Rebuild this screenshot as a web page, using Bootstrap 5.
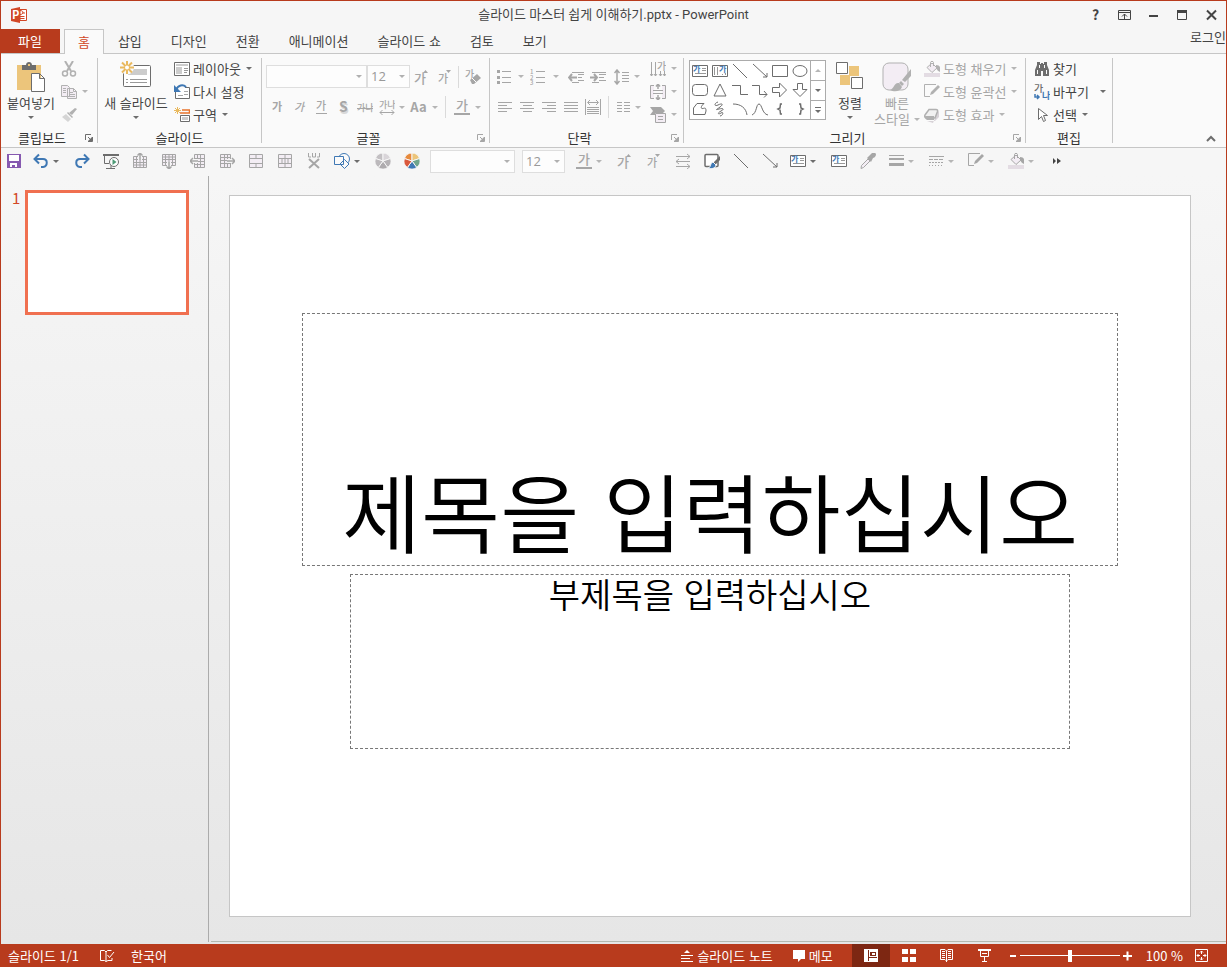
<!DOCTYPE html>
<html lang="ko">
<head>
<meta charset="utf-8">
<meta name="viewport" content="width=device-width, initial-scale=1">
<title>슬라이드 마스터 쉽게 이해하기.pptx - PowerPoint</title>
<link href="https://cdn.jsdelivr.net/npm/bootstrap@5.3.0/dist/css/bootstrap.min.css" rel="stylesheet">
<style>
:root{--brand:#b83b1d;--line:#c6c6c6;--ink:#444;--dim:#a6a6a6}
body{font-family:"Open Sans","Noto Sans CJK KR",sans-serif;font-size:12px;line-height:16px;color:var(--ink);background:#f6f6f6}
.ko{font-family:"Noto Sans CJK KR",sans-serif;font-size:13px}
.app-window{border:1px solid var(--brand);border-bottom:0}
.tb{--bs-btn-color:var(--ink);--bs-btn-disabled-color:var(--dim);--bs-btn-disabled-opacity:1;--bs-btn-hover-color:var(--ink);font:inherit;line-height:16px;padding:0;border:0;border-radius:0;white-space:nowrap;display:flex;align-items:center;justify-content:center}
svg{fill:none;stroke:currentColor;flex:none;display:block;overflow:visible}
svg text{fill:currentColor;stroke:none;font-family:"Noto Sans CJK KR",sans-serif;font-weight:500}
.ic{width:16px;height:16px}
.solid{fill:currentColor;stroke:none}
.caret{width:0;height:0;border:3px solid transparent;border-top-color:#6d6d6d;border-bottom:0;flex:none}
:disabled .caret{border-top-color:#b5b5b5}
.icon-ink{color:#6d6d6d}
:disabled .icon-ink{color:#b1b1b1}
/* title bar */
.titlebar{height:28px;display:grid;grid-template-columns:1fr auto 1fr}
.title-text{font:13px/18px Roboto,"Noto Sans CJK KR",sans-serif}
.win-btn{width:29px;height:28px}
/* tabs */
.tabs-row{height:25px;border-bottom:1px solid var(--line)}
.tabs-row a{color:var(--ink);text-decoration:none;line-height:24px;padding:0 15px 0 14px;white-space:nowrap}
.tabs-row a.file-tab{background:var(--brand);color:#fff;padding:0 18px 0 17px;margin-right:4px}
.tabs-row a.home-tab{background:#fafafa;color:#d24726;border:1px solid var(--line);border-bottom:0;padding:0 13px;height:25px}
/* ribbon */
.ribbon{height:94px;background:#fafafa;border-bottom:1px solid var(--line)}
.grp{display:flex;flex-direction:column}
.grp-body{flex:1;display:flex;padding-top:3px}
.grp-name{height:16px;line-height:14px;display:flex;color:#333}
.grp-name span{flex:1;text-align:center}
.launch{width:12px;height:14px;margin-right:2px}
.divide{width:1px;background:var(--line);margin:4px 0;flex:none}
.g-clip{width:96px}.g-slide{width:163px}.g-font{width:227px}.g-para{width:193px}.g-draw{width:341px}.g-edit{width:86px}
.big{flex-direction:column;justify-content:flex-start;padding-top:4px;align-self:flex-start}
.big .art{height:31px;margin-bottom:3px}
.big .caret{margin-top:5px}
.w-paste{width:60px}.w-new{width:76px}.w-arr{width:48px}.w-quick{width:46px}
.rows{display:flex;flex-direction:column;align-items:flex-start}
.rows .tb{height:23px;gap:3px}
.rows .ic+.caret{margin-left:2px}
.tool-grid{display:grid;align-items:center}
.tool-grid .tb{height:22px}
.sep{justify-self:center;width:1px;height:22px;background:#dadada}
.font-1{grid-template-columns:101px 43px 24px 22px 5px 24px;margin-top:8px;height:23px}
.font-2{grid-template-columns:22px 22px 22px 22px 22px 22px 8px 25px 8px 12px 22px 10px;margin-top:8px}
.para-1{grid-template-columns:28px 6px 28px 7px 6px 22px 22px 25px 6px;margin-top:8px;height:23px}
.para-2{grid-template-columns:22px 22px 22px 22px 22px 8px 22px 8px;margin:8px 0 0 4px}
.combo{appearance:none;height:23px;border:1px solid #dedede;border-radius:0;background:#fdfdfd;color:#999;padding:0 3px;font:13px/21px "Open Sans",sans-serif;opacity:1;background-image:url("data:image/svg+xml,%3Csvg xmlns='http://www.w3.org/2000/svg' width='6' height='3'%3E%3Cpath d='M0 0h6L3 3z' fill='%23b0b0b0'/%3E%3C/svg%3E");background-repeat:no-repeat;background-position:right 4px center}
.gallery{width:137px;height:60px;margin:3px 0 0 5px;border:1px solid #ababab;display:grid;grid-template-columns:repeat(6,20px) 1fr;grid-template-rows:repeat(3,1fr);background:#fff}
.gallery .tb{color:#6d6d6d}
.gallery .scr{border-left:1px solid #ababab}
.gallery .scr+.tb~.scr{border-top:1px solid #ababab}
/* quick access bar */
.qat{height:28px;padding-bottom:2px;display:flex;align-items:center}
.qat .tb{width:29px;height:24px}
.qat .tb.save{width:26px}
.qat .tb.split{width:40px;justify-content:flex-start;padding-left:6px;gap:4px}
.qat .wide{width:85px;margin:0 7px 0 4px}
.qat .slim{width:43px;margin-right:5px}
/* workspace */
.workspace{flex:1;min-height:0;background:linear-gradient(#f6f6f6,#e6e6e6)}
.thumbs{width:208px;border-right:1px solid #ababab;padding:14px 0 0 11px;margin-bottom:2px}
.thumbs .num{width:13px;color:#d24726;font:15px/15px "Noto Sans CJK KR",sans-serif}
.thumb{width:164px;height:125px;border:3px solid #f07050;background:#fff;padding:0}
.stage{border-bottom:1px solid #b3b9b0;margin:0 0 2px 2px;padding:19px 35px 24px 18px;min-width:0}
.slide{width:100%;height:100%;background:#fff;border:1px solid var(--line);display:grid;justify-items:center;grid-template-rows:117fr 253fr 8fr 175fr 167fr;color:#000}
.ph{border:1px dashed #777;display:flex;justify-content:center;margin:0;white-space:nowrap;font-family:"Noto Sans CJK KR",sans-serif;font-weight:350;min-width:0}
.ph-title{grid-row:2;width:85%;align-items:flex-end;font-size:86px;line-height:98px;padding-bottom:6px}
.ph-sub{grid-row:4;width:75%;font-size:34px;line-height:38px}
/* status bar */
.status{height:23px;background:var(--brand);color:#fff;padding-left:7px}
.status .tb{--bs-btn-color:#fff;--bs-btn-hover-color:#fff;height:23px}
.status .view{width:38px}
.status .view.on{background:#7d2712}
.notes-btn{margin-right:20px}
.memo-btn{margin-right:19px}
.zoom-out{margin-left:6px}
.zoom{appearance:none;width:100px;height:13px;background:linear-gradient(#fff,#fff) center/100% 1px no-repeat;margin:0 3px}
.zoom::-webkit-slider-thumb{appearance:none;width:4px;height:12px;background:#fff}
.zoom-num{margin:0 12px 0 14px}
.fit{margin-right:18px}
</style>
</head>
<body>
<svg class="d-none" aria-hidden="true">
  <symbol id="i-find" viewBox="0 0 16 16"><path class="solid" d="M3 1h3v2h1V2h2v1h1V1h3v3l2 5v6H9v-5H7v5H1V9l2-5z"/><path stroke="#fafafa" d="M3.5 9v4M12.5 9v4M5.500 4v3M10.500 4v3"/></symbol>
  <symbol id="i-cut" viewBox="0 0 16 16"><path stroke-width="2" d="M4 0l6 10M12 0L6 10"/><circle cx="4" cy="12.500" r="2.500" stroke-width="1.500"/><circle cx="12" cy="12.500" r="2.500" stroke-width="1.500"/></symbol>
  <symbol id="i-copy" viewBox="0 0 16 16"><path fill="#f3edf4" d="M.5 1.500h6l2 2v9h-8zM6.500 4.500h6l3 3v7h-9zM12.500 4.500v3h3"/><path d="M2 4.500h3M2 6.500h3M2 8.500h3M8 8.500h4M8 10.500h6M8 12.500h6"/></symbol>
  <symbol id="i-brush" viewBox="0 0 16 16"><path class="solid" d="M16 2l-5 6-3-2 6-5z"/><path class="solid" d="M7 5l5 5-1 1-5-5z"/><path fill="#d5d5d5" stroke="none" d="M5 7l5 5-3 3-6-5z"/></symbol>
  <symbol id="i-layout" viewBox="0 0 16 16"><path fill="#fff" d="M.5 1.500h15v13H.5z"/><path class="solid" opacity=".35" d="M2 3h12v2H2zM2 6h6v7H2z"/><path opacity=".7" d="M10 7.500h4M10 9.500h4M10 11.500h3"/></symbol>
  <symbol id="i-reset" viewBox="0 0 16 16"><path fill="#fff" d="M1.500 8v6.500h14v-11H11"/><path opacity=".6" d="M10 7.500h4M4 11.500h5M10 10.500h4"/><path stroke="#3f78b4" stroke-width="2" d="M2 6c2-5 7-6 10-3"/><path fill="#3f78b4" stroke="none" d="M0 1v7h7z"/></symbol>
  <symbol id="i-section" viewBox="0 0 16 16"><path stroke="#e9b95e" d="M3.500 0v7M0 3.500h7M1 1l5 5M6 1L1 6"/><path stroke="#e8742d" stroke-width="1.500" d="M8 3h7.500v3H6"/><path fill="#fff" d="M6.500 8.500h9v6h-9z"/><path class="solid" opacity=".35" d="M8 10h6v3H8z"/></symbol>
  <symbol id="i-up" viewBox="0 0 16 16"><text x="0" y="14" font-size="13">가</text><path class="solid" d="M9 4l2.500-3L14 4z"/></symbol>
  <symbol id="i-down" viewBox="0 0 16 16"><text x="1" y="14" font-size="11">가</text><path class="solid" d="M9 1h5l-2.500 3z"/></symbol>
  <symbol id="i-clear" viewBox="0 0 16 16"><text x="0" y="9" font-size="10">가</text><path class="solid" d="M5 11l7-6 4 4-7 6H7z"/><path stroke="#fff" d="M7 9l4 4"/></symbol>
  <symbol id="i-bold" viewBox="0 0 16 16"><text x="3" y="12" font-size="11" style="font-weight:700">가</text></symbol>
  <symbol id="i-ital" viewBox="0 0 16 16"><text x="3" y="12" font-size="11" font-style="italic">가</text></symbol>
  <symbol id="i-under" viewBox="0 0 16 16"><text x="3" y="11" font-size="11">가</text><path d="M3 14.500h11"/></symbol>
  <symbol id="i-shadow" viewBox="0 0 16 16"><text x="5" y="15" font-size="14" style="font-weight:700" opacity=".4">S</text><text x="4" y="13" font-size="14" style="font-weight:700">S</text></symbol>
  <symbol id="i-strike" viewBox="0 0 16 16"><text x="0" y="12" font-size="9">가나</text><path d="M0 9.500h16"/></symbol>
  <symbol id="i-kern" viewBox="0 0 16 16"><text x="0" y="9" font-size="9">가나</text><path d="M1 13.500h14M3.500 11L1 13.500 3.500 16M12.500 11l2.500 2.500-2.500 2.500"/></symbol>
  <symbol id="i-color" viewBox="0 0 16 16"><text x="2" y="11" font-size="13">가</text><path class="solid" d="M0 14h16v2H0z"/></symbol>
  <symbol id="i-bullet" viewBox="0 0 16 16"><path class="solid" d="M1 1h3v3H1zM1 7h3v3H1zM1 12h3v3H1z"/><path d="M6 2.500h9M6 8.500h9M6 13.500h9"/></symbol>
  <symbol id="i-number" viewBox="0 0 16 16"><text x="0" y="5" font-size="6">1</text><text x="0" y="11" font-size="6">2</text><text x="0" y="16" font-size="6">3</text><path d="M6 2.500h9M6 8.500h9M6 13.500h9"/></symbol>
  <symbol id="i-outdent" viewBox="0 0 16 16"><path d="M4 3.500h12M10 5.500h6M10 8.500h4M10 11.500h6M4 13.500h7"/><path stroke-width="2" d="M9 8.500H1M4 5L1 8.500 4 12"/></symbol>
  <symbol id="i-indent" viewBox="0 0 16 16"><path d="M2 3.500h14M9 5.500h7M9 8.500h5M9 11.500h7M2 13.500h7"/><path stroke-width="2" d="M0 8.500h7M4 5l3 3.500L4 12"/></symbol>
  <symbol id="i-spacing" viewBox="0 0 16 16"><path stroke-width="1.500" d="M3 1v14M.5 4L3 1l2.500 3M.5 12L3 15l2.500-3"/><path d="M8 3.500h7M8 6.500h7M8 9.500h7M8 12.500h7"/></symbol>
  <symbol id="i-left" viewBox="0 0 16 16"><path d="M1 3.500h14M1 6.500h9M1 9.500h14M1 12.500h9"/></symbol>
  <symbol id="i-center" viewBox="0 0 16 16"><path d="M1 3.500h14M4 6.500h9M1 9.500h14M4 12.500h9"/></symbol>
  <symbol id="i-right" viewBox="0 0 16 16"><path d="M1 3.500h14M6 6.500h9M1 9.500h14M6 12.500h9"/></symbol>
  <symbol id="i-just" viewBox="0 0 16 16"><path d="M1 3.500h14M1 6.500h14M1 9.500h14M1 12.500h14"/></symbol>
  <symbol id="i-dist" viewBox="0 0 16 16"><path d="M.5 0v16M15.500 0v16M3 3.500h10M5 1L2.500 3.500 5 6M11 1l2.500 2.500L11 6M2 8.500h12M2 10.500h12M2 12.500h12M2 14.500h12"/></symbol>
  <symbol id="i-cols" viewBox="0 0 16 16"><path d="M2 3.500h5M2 6.500h5M2 9.500h5M2 12.500h5M9 3.500h6M9 6.500h6M9 9.500h6M9 12.500h6"/></symbol>
  <symbol id="i-tdir" viewBox="0 0 16 16"><path d="M1.500 1v14M5.500 1v14M10.500 10v5M14.500 10v5M0 13l1.500 2L3 13M4 13l1.500 2L7 13M9 13l1.500 2 1.500-2M13 13l1.500 2 1.500-2"/><text x="7" y="9" font-size="10">가</text></symbol>
  <symbol id="i-valign" viewBox="0 0 16 16"><path fill="#f3edf4" d="M4 1.500H.5v13H4M12 1.500h3.500v13H12"/><path d="M3 6.500h10M3 9.500h10"/><path stroke-width="1.500" d="M8 0v5M6 2.500L8 0l2 2.500M8 16v-5M6 13.500L8 16l2-2.500"/></symbol>
  <symbol id="i-smart" viewBox="0 0 16 16"><path class="solid" d="M0 0h11l4 4-2 2H5v2H0l3-4z"/><path fill="#f3edf4" d="M5.500 6.500h10v9h-10z"/><path d="M8 9.500h5M8 12.500h5"/></symbol>
  <symbol id="i-tbox" viewBox="0 0 16 16"><path fill="#fff" d="M.5 2.500h15v11H.5z"/><path opacity=".7" d="M10 5.500h4M10 7.500h4M3 10.500h11"/><text x="1" y="9" font-size="8" style="fill:#3f78b4;font-weight:700">가</text></symbol>
  <symbol id="i-vtbox" viewBox="0 0 16 16"><path fill="#fff" d="M.5 2.500h15v11H.5z"/><path opacity=".7" d="M2.500 4v8M5.500 4v8M10.500 11v1M13.500 10v2"/><text x="7" y="9" font-size="8" style="fill:#3f78b4;font-weight:700">가</text></symbol>
  <symbol id="i-line" viewBox="0 0 16 16"><path d="M1 1l14 14"/></symbol>
  <symbol id="i-arrow" viewBox="0 0 16 16"><path d="M1 1l14 13M15 10v4h-4"/></symbol>
  <symbol id="i-rect" viewBox="0 0 16 16"><path d="M.5 2.500h15v11H.5z"/></symbol>
  <symbol id="i-oval" viewBox="0 0 16 16"><ellipse cx="8" cy="8" rx="7" ry="5.500"/></symbol>
  <symbol id="i-rrect" viewBox="0 0 16 16"><rect x=".5" y="2.500" width="15" height="11" rx="3"/></symbol>
  <symbol id="i-tri" viewBox="0 0 16 16"><path d="M8 2l6 12H2z"/></symbol>
  <symbol id="i-elbow" viewBox="0 0 16 16"><path d="M0 3.500h8.500v9H16"/></symbol>
  <symbol id="i-elbowa" viewBox="0 0 16 16"><path d="M0 3.500h7.500v9H15M12 9l3 3.500-3 3"/></symbol>
  <symbol id="i-ra" viewBox="0 0 16 16"><path d="M.5 5.500h7V1l7 7-7 7v-4.500h-7z"/></symbol>
  <symbol id="i-da" viewBox="0 0 16 16"><path d="M5.500 1.500h5v6H15l-7 7-7-7h4.500z"/></symbol>
  <symbol id="i-free" viewBox="0 0 16 16"><path d="M5 2.500h7C8 6 9 8 11 7.500s3-1 3 2.500l-1 3.500H1.500V7z"/></symbol>
  <symbol id="i-scrib" viewBox="0 0 16 16"><path d="M6 1C2 2 2 6 6 4s6-1 2 2-5 3-1 2 6 0 2 2-3 4 0 2 2 3-1 3"/></symbol>
  <symbol id="i-arc" viewBox="0 0 16 16"><path d="M1 3c8 0 13 4 14 11"/></symbol>
  <symbol id="i-curve" viewBox="0 0 16 16"><path d="M0 14C5 12 4 3 7 3s3 10 9 11"/></symbol>
  <symbol id="i-lb" viewBox="0 0 16 16"><path stroke-width="1.500" d="M10 3H8.500L8 7 6 8l2 1 .5 4H10"/></symbol>
  <symbol id="i-rb" viewBox="0 0 16 16"><path stroke-width="1.500" d="M7 3h1.500L9 7l2 1-2 1-.5 4H7"/></symbol>
  <symbol id="i-bucket" viewBox="0 0 16 16"><path fill="#f3edf4" d="M3 6.500L8 2l5 5-5 4.500z"/><path d="M6.500 6V1.500C6.500 0 9.500 0 9.500 1.500V5"/><path class="solid" d="M12 4c4 0 5 3 4 7-2-1-3-2-4-4z"/><path fill="#e3dce3" stroke="none" d="M0 12h16v4H0z"/></symbol>
  <symbol id="i-pen" viewBox="0 0 16 16"><path d="M12 .5H.5v12H6"/><path class="solid" d="M14 1l2 2-7 7-3 1 1-3z"/></symbol>
  <symbol id="i-effect" viewBox="0 0 16 16"><path fill="#d7d2d7" stroke="none" d="M3 14h8l4-4V5l-1-1-5 12z"/><path stroke-width="1.500" fill="#f1f1f1" d="M5 2.500h7q2 0 1.500 2L11 11H2q-2-1-1-3z"/><path class="solid" d="M1 9h9v4H3q-2-1-2-4z"/></symbol>
  <symbol id="i-replace" viewBox="0 0 16 16"><text x="0" y="8" font-size="10">가</text><text x="8" y="15" font-size="9" style="fill:#3f78b4;font-weight:700">나</text><path stroke="#3f78b4" stroke-width="1.500" d="M1 10v3h4M3 11l2 2-2 2"/></symbol>
  <symbol id="i-select" viewBox="0 0 16 16"><path fill="#fff" d="M4.500 1.500v11l3-3 2 5 2-1-2-5h4z"/></symbol>
  <symbol id="i-save" viewBox="0 0 16 16"><path fill="#8659b0" stroke="none" d="M1 1h14v14H1z"/><path fill="#fff" stroke="none" d="M3 2h10v6H3zM4 10h7v4H9v-2H6v2H4z"/></symbol>
  <symbol id="i-undo" viewBox="0 0 16 16"><path stroke="#3f78b4" stroke-width="2" d="M2 6h8c5 0 5 7 0 8H8M6 1.500L1.500 6 6 10.500"/></symbol>
  <symbol id="i-redo" viewBox="0 0 16 16"><path stroke="#3f78b4" stroke-width="2" d="M14 6H6c-5 0-5 7 0 8h2M10 1.500L14.500 6 10 10.500"/></symbol>
  <symbol id="i-play" viewBox="0 0 16 16"><path stroke-width="2" d="M0 2h16"/><path d="M1.500 2v8.500H6M3 15.500h9M8 12v3"/><circle cx="11" cy="9" r="4.500" fill="#fff"/><path fill="#4e9a76" stroke="none" d="M9.500 6l4 3-4 3z"/></symbol>
  <symbol id="i-trow" viewBox="0 0 16 16"><path fill="#f3edf4" d="M1.500 3.500h13v11h-13zM1.500 6.500h13M1.500 9.500h13M1.500 12h13M4.500 3v11M8 3v11M11.500 3v11"/><path stroke="#f6f6f6" stroke-width="4" d="M8 7V0"/><path stroke-width="1.500" d="M8 7V0M5.500 2.500L8 0l2.500 2.500"/></symbol>
  <symbol id="i-tcol" viewBox="0 0 16 16"><path fill="#f3edf4" d="M4.500 1.500h10v13h-10zM7.500 1.500v13M10.500 1.500v13M4 5.500h11M4 8.500h11M4 11.500h11"/><path stroke="#f6f6f6" stroke-width="4" d="M8 8H2"/><path stroke-width="1.500" d="M8 8H0M3 5L0 8l3 3"/></symbol>
  <symbol id="i-merge" viewBox="0 0 16 16"><path fill="#f3edf4" d="M1.500 1.500h13v13h-13zM1.500 5.500h13M1.500 10.500h13M8 1.500v4M8 10.500v4"/></symbol>
  <symbol id="i-splitc" viewBox="0 0 16 16"><path fill="#f3edf4" d="M1.500 1.500h13v13h-13zM1.500 5.500h13M1.500 10.500h13M8 1.500v13M5 5.500v5M11 5.500v5"/></symbol>
  <symbol id="i-del" viewBox="0 0 16 16"><path d="M2.500 0v4H5M13.500 0v4H11M6.500 0v4h3V0"/><path stroke-width="2" d="M3 6l10 9M13 6L3 15"/></symbol>
  <symbol id="i-shapes" viewBox="0 0 16 16"><g stroke="#3f78b4" fill="#fafafa"><circle cx="10" cy="6" r="5.500"/><path d="M.5 3.500h9v8h-9zM10.500 6.500l4.500 4.500-4.500 4.500L6 11z"/></g></symbol>
  <symbol id="i-pie" viewBox="0 0 16 16"><g stroke="#f6f6f6"><path fill="#c3c0c3" d="M8 8V0A8 8 0 0 0 .4 5.500z"/><path fill="#d9d5d9" d="M8 8V0a8 8 0 0 1 7.600 5.500z"/><path fill="#b5b2b5" d="M8 8l7.600-2.500A8 8 0 0 1 12.700 14.500z"/><path fill="#aeabae" d="M8 8l4.700 6.500a8 8 0 0 1-9.400 0z"/><path fill="#bcb9bc" d="M8 8l-4.700 6.500A8 8 0 0 1 .4 5.500z"/></g></symbol>
  <symbol id="i-piec" viewBox="0 0 16 16"><g stroke="#f6f6f6"><path fill="#e78a3d" d="M8 8V0A8 8 0 0 0 .4 5.500z"/><path fill="#ecc57b" d="M8 8V0a8 8 0 0 1 7.600 5.500z"/><path fill="#6fa58c" d="M8 8l7.600-2.500A8 8 0 0 1 12.700 14.500z"/><path fill="#3f78b4" d="M8 8l4.700 6.500a8 8 0 0 1-9.400 0z"/><path fill="#d9593d" d="M8 8l-4.700 6.500A8 8 0 0 1 .4 5.500z"/></g></symbol>
  <symbol id="i-swap" viewBox="0 0 16 16"><path d="M1 3.500h14M12 1l3 2.500L12 6M15 8.500H1M4 6L1 8.500 4 11M1 13.500h14M12 11l3 2.500-3 2.500"/></symbol>
  <symbol id="i-fmt" viewBox="0 0 16 16"><rect x="1" y="1.500" width="13" height="12" rx="1" fill="#fff" stroke-width="1.500"/><path class="solid" stroke="#f6f6f6" d="M16 3v4l-5 5-2-2z"/><path fill="#3f78b4" stroke="#f6f6f6" style="fill:#3f78b4" d="M9 9l3 3c-1 4-5 4-8 3 3 0 2-5 5-6z"/></symbol>
  <symbol id="i-drop" viewBox="0 0 16 16"><path fill="#f3edf4" d="M1 15.500l.5-3L8 6l2 2-6.500 6.500z"/><path class="solid" d="M7 5l2-2 3-3q3-1 4 1-0 3-3 4l-2 4z"/></symbol>
  <symbol id="i-weight" viewBox="0 0 16 16"><path d="M1 2.500h15"/><path stroke-width="2" d="M1 6h15"/><path stroke-width="3" d="M1 11.500h15"/></symbol>
  <symbol id="i-dash" viewBox="0 0 16 16"><path d="M1 3.500h15"/><path stroke-dasharray="4 1" d="M1 6.500h15"/><path stroke-dasharray="2 1" d="M1 9.500h15"/><path stroke-dasharray="1 2" d="M1 12.500h15"/></symbol>
  <symbol id="i-launch" viewBox="0 0 8 8"><path d="M.5 6V.5H6M3 3l3 3M7.500 3v4.500H3"/><path class="solid" d="M7 3v4H3z"/></symbol>
</svg>

<div class="app-window d-flex flex-column vh-100 overflow-hidden">
  <header class="titlebar">
    <div class="d-flex align-items-center ps-2">
      <svg width="18" height="16" viewBox="0 0 18 16" role="img" aria-label="PowerPoint"><path fill="#fff" stroke="#d24726" d="M11 2.500h6.500v11H11z"/><path stroke="#d24726" d="M11 9.500h4.500M11 11.500h4.500M11 7.500c4 0 4-4 0-4M13 6h3"/><path fill="#d24726" stroke="none" d="M2 2l9-2v16l-9-2z"/><text x="3" y="12" font-size="11" style="fill:#fff;font-weight:700">P</text></svg>
    </div>
    <h1 class="m-0 align-self-center title-text">슬라이드 마스터 쉽게 이해하기.pptx - PowerPoint</h1>
    <div class="d-flex justify-content-end icon-ink">
      <button class="btn tb win-btn" aria-label="도움말"><svg class="ic"><text x="4" y="13" font-size="14" style="font-weight:700">?</text></svg></button>
      <button class="btn tb win-btn" aria-label="리본 표시 옵션"><svg class="ic"><path d="M1.500 3.500h12v9h-12zM1 5.500h12M7.500 12V7M5 9.500L7.500 7 10 9.500"/></svg></button>
      <button class="btn tb win-btn" aria-label="최소화"><svg class="ic"><path stroke-width="2" d="M3 9h9"/></svg></button>
      <button class="btn tb win-btn" aria-label="최대화"><svg class="ic"><path d="M2.500 3.500h9v9h-9z"/><path stroke-width="3" d="M2 4.500h10"/></svg></button>
      <button class="btn tb win-btn" aria-label="닫기"><svg class="ic"><path stroke-width="2" d="M3 3.500l9 9M12 3.500l-9 9"/></svg></button>
    </div>
  </header>

  <nav class="tabs-row d-flex ko">
    <a href="#" class="file-tab">파일</a><a href="#" class="home-tab">홈</a>
    <a href="#">삽입</a><a href="#">디자인</a><a href="#">전환</a><a href="#">애니메이션</a><a href="#">슬라이드 쇼</a><a href="#">검토</a><a href="#">보기</a>
    <a href="#" class="ms-auto px-0 lh-sm">로그인</a>
  </nav>

  <section class="ribbon d-flex ko" aria-label="홈 리본">
    <div class="grp g-clip">
      <div class="grp-body">
        <button class="btn tb big w-paste"><svg class="art" width="28" height="31"><path fill="#ecc57b" stroke="none" d="M0 4h24v25H0z"/><path class="solid icon-ink" d="M5 4h4c0-4 6-4 6 0h4v5H5z"/><path fill="#ecc57b" stroke="none" d="M11 3h2v2h-2z"/><path class="icon-ink" fill="#fff" d="M14.500 12.500h8l5 5v13h-13zM22.500 12.500v5h5"/></svg>붙여넣기<i class="caret"></i></button>
        <div class="rows">
          <button class="btn tb" disabled aria-label="잘라내기"><svg class="ic icon-ink"><use href="#i-cut"/></svg></button>
          <button class="btn tb" disabled aria-label="복사"><svg class="ic icon-ink"><use href="#i-copy"/></svg><i class="caret"></i></button>
          <button class="btn tb" disabled aria-label="서식 복사"><svg class="ic icon-ink"><use href="#i-brush"/></svg></button>
        </div>
      </div>
      <div class="grp-name"><span>클립보드</span><button class="btn tb launch" aria-label="클립보드 옵션"><svg width="8" height="8" class="icon-ink"><use href="#i-launch"/></svg></button></div>
    </div>
    <div class="divide"></div>
    <div class="grp g-slide">
      <div class="grp-body">
        <button class="btn tb big w-new"><svg class="art icon-ink" width="32" height="31"><rect x="3.500" y="4.500" width="27" height="21" rx="1" fill="#fff"/><path class="solid" opacity=".35" d="M8 8h19v6H8z"/><path opacity=".7" d="M10 18.500h17M10 21.500h17M6 18.500h2M6 21.500h2"/><circle cx="7" cy="6.500" r="7" fill="#fafafa" stroke="none"/><path stroke="#e9b95e" stroke-width="2" d="M7 0v13M0 6.500h14M2 1.500l10 10M12 1.500l-10 10"/><circle cx="7" cy="6.500" r="2" fill="#fff" stroke="none"/></svg>새 슬라이드<i class="caret"></i></button>
        <div class="rows">
          <button class="btn tb"><svg class="ic icon-ink"><use href="#i-layout"/></svg>레이아웃<i class="caret"></i></button>
          <button class="btn tb"><svg class="ic icon-ink"><use href="#i-reset"/></svg>다시 설정</button>
          <button class="btn tb"><svg class="ic icon-ink"><use href="#i-section"/></svg>구역<i class="caret"></i></button>
        </div>
      </div>
      <div class="grp-name"><span>슬라이드</span></div>
    </div>
    <div class="divide"></div>
    <div class="grp g-font">
      <div class="grp-body flex-column ps-1">
        <div class="tool-grid font-1">
          <select class="combo" disabled aria-label="글꼴"><option></option></select>
          <select class="combo" disabled aria-label="글꼴 크기"><option>12</option></select>
          <button class="btn tb" disabled aria-label="글꼴 크기 크게"><svg class="ic"><use href="#i-up"/></svg></button>
          <button class="btn tb" disabled aria-label="글꼴 크기 작게"><svg class="ic"><use href="#i-down"/></svg></button>
          <span class="sep"></span>
          <button class="btn tb" disabled aria-label="서식 지우기"><svg class="ic"><use href="#i-clear"/></svg></button>
        </div>
        <div class="tool-grid font-2">
          <button class="btn tb" disabled aria-label="굵게"><svg class="ic"><use href="#i-bold"/></svg></button>
          <button class="btn tb" disabled aria-label="기울임꼴"><svg class="ic"><use href="#i-ital"/></svg></button>
          <button class="btn tb" disabled aria-label="밑줄"><svg class="ic"><use href="#i-under"/></svg></button>
          <button class="btn tb" disabled aria-label="그림자"><svg class="ic"><use href="#i-shadow"/></svg></button>
          <button class="btn tb" disabled aria-label="취소선"><svg class="ic"><use href="#i-strike"/></svg></button>
          <button class="btn tb" disabled aria-label="문자 간격"><svg class="ic"><use href="#i-kern"/></svg></button>
          <button class="btn tb" disabled aria-label="문자 간격 메뉴"><i class="caret"></i></button>
          <button class="btn tb fw-semibold" disabled>Aa</button>
          <button class="btn tb" disabled aria-label="대소문자 메뉴"><i class="caret"></i></button>
          <span class="sep"></span>
          <button class="btn tb" disabled aria-label="글꼴 색"><svg class="ic"><use href="#i-color"/></svg></button>
          <button class="btn tb" disabled aria-label="글꼴 색 메뉴"><i class="caret"></i></button>
        </div>
      </div>
      <div class="grp-name"><span>글꼴</span><button class="btn tb launch" disabled aria-label="글꼴 옵션"><svg width="8" height="8"><use href="#i-launch"/></svg></button></div>
    </div>
    <div class="divide"></div>
    <div class="grp g-para">
      <div class="grp-body">
        <div>
          <div class="tool-grid para-1">
            <button class="btn tb" disabled aria-label="글머리 기호"><svg class="ic"><use href="#i-bullet"/></svg></button>
            <button class="btn tb" disabled aria-label="글머리 기호 메뉴"><i class="caret"></i></button>
            <button class="btn tb" disabled aria-label="번호 매기기"><svg class="ic"><use href="#i-number"/></svg></button>
            <button class="btn tb" disabled aria-label="번호 매기기 메뉴"><i class="caret"></i></button>
            <span></span>
            <button class="btn tb" disabled aria-label="목록 수준 줄임"><svg class="ic"><use href="#i-outdent"/></svg></button>
            <button class="btn tb" disabled aria-label="목록 수준 늘림"><svg class="ic"><use href="#i-indent"/></svg></button>
            <button class="btn tb" disabled aria-label="줄 간격"><svg class="ic"><use href="#i-spacing"/></svg></button>
            <button class="btn tb" disabled aria-label="줄 간격 메뉴"><i class="caret"></i></button>
          </div>
          <div class="tool-grid para-2">
            <button class="btn tb" disabled aria-label="왼쪽 맞춤"><svg class="ic"><use href="#i-left"/></svg></button>
            <button class="btn tb" disabled aria-label="가운데 맞춤"><svg class="ic"><use href="#i-center"/></svg></button>
            <button class="btn tb" disabled aria-label="오른쪽 맞춤"><svg class="ic"><use href="#i-right"/></svg></button>
            <button class="btn tb" disabled aria-label="양쪽 맞춤"><svg class="ic"><use href="#i-just"/></svg></button>
            <button class="btn tb" disabled aria-label="균등 분할"><svg class="ic"><use href="#i-dist"/></svg></button>
            <span class="sep"></span>
            <button class="btn tb" disabled aria-label="열"><svg class="ic"><use href="#i-cols"/></svg></button>
            <button class="btn tb" disabled aria-label="열 메뉴"><i class="caret"></i></button>
          </div>
        </div>
        <div class="rows ms-2">
          <button class="btn tb" disabled aria-label="텍스트 방향"><svg class="ic"><use href="#i-tdir"/></svg><i class="caret"></i></button>
          <button class="btn tb" disabled aria-label="텍스트 맞춤"><svg class="ic"><use href="#i-valign"/></svg><i class="caret"></i></button>
          <button class="btn tb" disabled aria-label="SmartArt로 변환"><svg class="ic"><use href="#i-smart"/></svg><i class="caret"></i></button>
        </div>
      </div>
      <div class="grp-name"><span>단락</span><button class="btn tb launch" disabled aria-label="단락 옵션"><svg width="8" height="8"><use href="#i-launch"/></svg></button></div>
    </div>
    <div class="divide"></div>
    <div class="grp g-draw">
      <div class="grp-body">
        <div class="gallery">
          <button class="btn tb" aria-label="텍스트 상자"><svg class="ic"><use href="#i-tbox"/></svg></button><button class="btn tb" aria-label="세로 텍스트 상자"><svg class="ic"><use href="#i-vtbox"/></svg></button><button class="btn tb" aria-label="선"><svg class="ic"><use href="#i-line"/></svg></button><button class="btn tb" aria-label="화살표"><svg class="ic"><use href="#i-arrow"/></svg></button><button class="btn tb" aria-label="직사각형"><svg class="ic"><use href="#i-rect"/></svg></button><button class="btn tb" aria-label="타원"><svg class="ic"><use href="#i-oval"/></svg></button>
          <button class="btn tb scr" disabled aria-label="위로"><svg width="6" height="3"><path class="solid" opacity=".5" d="M0 3l3-3 3 3z"/></svg></button>
          <button class="btn tb" aria-label="둥근 직사각형"><svg class="ic"><use href="#i-rrect"/></svg></button><button class="btn tb" aria-label="삼각형"><svg class="ic"><use href="#i-tri"/></svg></button><button class="btn tb" aria-label="꺾인 연결선"><svg class="ic"><use href="#i-elbow"/></svg></button><button class="btn tb" aria-label="꺾인 화살표"><svg class="ic"><use href="#i-elbowa"/></svg></button><button class="btn tb" aria-label="오른쪽 화살표"><svg class="ic"><use href="#i-ra"/></svg></button><button class="btn tb" aria-label="아래쪽 화살표"><svg class="ic"><use href="#i-da"/></svg></button>
          <button class="btn tb scr" aria-label="아래로"><i class="caret"></i></button>
          <button class="btn tb" aria-label="자유형"><svg class="ic"><use href="#i-free"/></svg></button><button class="btn tb" aria-label="자유 곡선"><svg class="ic"><use href="#i-scrib"/></svg></button><button class="btn tb" aria-label="원호"><svg class="ic"><use href="#i-arc"/></svg></button><button class="btn tb" aria-label="곡선"><svg class="ic"><use href="#i-curve"/></svg></button><button class="btn tb" aria-label="왼쪽 중괄호"><svg class="ic"><use href="#i-lb"/></svg></button><button class="btn tb" aria-label="오른쪽 중괄호"><svg class="ic"><use href="#i-rb"/></svg></button>
          <button class="btn tb scr" aria-label="자세히"><svg width="6" height="6"><path d="M0 .5h6"/><path class="solid" d="M0 3h6L3 6z"/></svg></button>
        </div>
        <button class="btn tb big w-arr"><svg class="art icon-ink" width="28" height="31"><path fill="#ecc57b" stroke="none" d="M13 5h10v10H13zM4 14h10v10H4z"/><path fill="#fff" d="M.5 1.500h11v11H.5zM15.500 16.500h11v11h-11z"/></svg>정렬<i class="caret"></i></button>
        <button class="btn tb big w-quick" disabled><svg class="art icon-ink" width="30" height="31"><rect x="1" y="2" width="25" height="27" rx="6" fill="#f3edf4"/><path class="solid" stroke="#fafafa" d="M29 8v7l-6 6-3-2zM19 20l3 3-2 2-3-3z"/><path class="solid" d="M17 22l3 4c-2 5-8 5-12 3 4-1 4-8 9-7z"/></svg>빠른<span class="d-flex align-items-center">스타일<i class="caret m-0 ms-1"></i></span></button>
        <div class="rows ms-1">
          <button class="btn tb" disabled><svg class="ic icon-ink"><use href="#i-bucket"/></svg>도형 채우기<i class="caret"></i></button>
          <button class="btn tb" disabled><svg class="ic icon-ink"><use href="#i-pen"/></svg>도형 윤곽선<i class="caret"></i></button>
          <button class="btn tb" disabled><svg class="ic icon-ink"><use href="#i-effect"/></svg>도형 효과<i class="caret"></i></button>
        </div>
      </div>
      <div class="grp-name"><span>그리기</span><button class="btn tb launch" disabled aria-label="그리기 옵션"><svg width="8" height="8"><use href="#i-launch"/></svg></button></div>
    </div>
    <div class="divide"></div>
    <div class="grp g-edit">
      <div class="grp-body">
        <div class="rows ms-2">
          <button class="btn tb"><svg class="ic icon-ink"><use href="#i-find"/></svg>찾기</button>
          <button class="btn tb"><svg class="ic icon-ink"><use href="#i-replace"/></svg>바꾸기<i class="caret ms-2"></i></button>
          <button class="btn tb"><svg class="ic icon-ink"><use href="#i-select"/></svg>선택<i class="caret"></i></button>
        </div>
      </div>
      <div class="grp-name"><span>편집</span></div>
    </div>
    <div class="divide"></div>
    <button class="btn tb ms-auto me-2 align-self-end" aria-label="리본 축소"><svg width="14" height="14" class="icon-ink"><path stroke-width="2" d="M3 8l4-4 4 4"/></svg></button>
  </section>

  <div class="qat ko" role="toolbar" aria-label="빠른 실행 도구">
    <button class="btn tb save" aria-label="저장"><svg class="ic"><use href="#i-save"/></svg></button>
    <button class="btn tb split" aria-label="실행 취소"><svg class="ic"><use href="#i-undo"/></svg><i class="caret"></i></button>
    <button class="btn tb" aria-label="다시 실행"><svg class="ic"><use href="#i-redo"/></svg></button>
    <button class="btn tb" aria-label="슬라이드 쇼 시작"><svg class="ic icon-ink"><use href="#i-play"/></svg></button>
    <button class="btn tb" disabled aria-label="위에 행 삽입"><svg class="ic"><use href="#i-trow"/></svg></button>
    <button class="btn tb" disabled aria-label="아래에 행 삽입"><svg class="ic" viewBox="0 0 16 16"><g transform="rotate(180 8 8)"><use href="#i-trow"/></g></svg></button>
    <button class="btn tb" disabled aria-label="왼쪽에 열 삽입"><svg class="ic"><use href="#i-tcol"/></svg></button>
    <button class="btn tb" disabled aria-label="오른쪽에 열 삽입"><svg class="ic" viewBox="0 0 16 16"><g transform="rotate(180 8 8)"><use href="#i-tcol"/></g></svg></button>
    <button class="btn tb" disabled aria-label="셀 병합"><svg class="ic"><use href="#i-merge"/></svg></button>
    <button class="btn tb" disabled aria-label="셀 분할"><svg class="ic"><use href="#i-splitc"/></svg></button>
    <button class="btn tb" disabled aria-label="표 삭제"><svg class="ic"><use href="#i-del"/></svg></button>
    <button class="btn tb split" aria-label="도형"><svg class="ic"><use href="#i-shapes"/></svg><i class="caret"></i></button>
    <button class="btn tb" disabled aria-label="차트 색"><svg class="ic"><use href="#i-pie"/></svg></button>
    <button class="btn tb" aria-label="테마 색"><svg class="ic"><use href="#i-piec"/></svg></button>
    <select class="combo wide" disabled aria-label="글꼴"><option></option></select>
    <select class="combo slim" disabled aria-label="글꼴 크기"><option>12</option></select>
    <button class="btn tb split" disabled aria-label="글꼴 색"><svg class="ic"><use href="#i-color"/></svg><i class="caret"></i></button>
    <button class="btn tb" disabled aria-label="글꼴 크기 크게"><svg class="ic"><use href="#i-up"/></svg></button>
    <button class="btn tb" disabled aria-label="글꼴 크기 작게"><svg class="ic"><use href="#i-down"/></svg></button>
    <button class="btn tb" disabled aria-label="방향 바꾸기"><svg class="ic"><use href="#i-swap"/></svg></button>
    <button class="btn tb" aria-label="도형 서식"><svg class="ic icon-ink"><use href="#i-fmt"/></svg></button>
    <button class="btn tb" aria-label="선"><svg class="ic icon-ink"><use href="#i-line"/></svg></button>
    <button class="btn tb" aria-label="화살표"><svg class="ic icon-ink"><use href="#i-arrow"/></svg></button>
    <button class="btn tb split" aria-label="텍스트 상자 메뉴"><svg class="ic icon-ink"><use href="#i-tbox"/></svg><i class="caret"></i></button>
    <button class="btn tb" aria-label="텍스트 상자"><svg class="ic icon-ink"><use href="#i-tbox"/></svg></button>
    <button class="btn tb" disabled aria-label="스포이트"><svg class="ic"><use href="#i-drop"/></svg></button>
    <button class="btn tb split" disabled aria-label="두께"><svg class="ic"><use href="#i-weight"/></svg><i class="caret"></i></button>
    <button class="btn tb split" disabled aria-label="대시"><svg class="ic"><use href="#i-dash"/></svg><i class="caret"></i></button>
    <button class="btn tb split" disabled aria-label="윤곽선"><svg class="ic"><use href="#i-pen"/></svg><i class="caret"></i></button>
    <button class="btn tb split" disabled aria-label="채우기"><svg class="ic"><use href="#i-bucket"/></svg><i class="caret"></i></button>
    <button class="btn tb" aria-label="더 보기"><svg width="8" height="6"><path class="solid" d="M0 0l3 3-3 3zM4 0l4 3-4 3z"/></svg></button>
  </div>

  <main class="workspace d-flex">
    <aside class="thumbs d-flex flex-shrink-0 align-items-start">
      <span class="num">1</span><button class="thumb" aria-label="슬라이드 1"></button>
    </aside>
    <div class="stage flex-fill">
      <article class="slide">
        <h2 class="ph ph-title">제목을 입력하십시오</h2>
        <p class="ph ph-sub">부제목을 입력하십시오</p>
      </article>
    </div>
  </main>

  <footer class="status d-flex align-items-center ko flex-shrink-0">
    <span>슬라이드 1/1</span>
    <button class="btn tb mx-3 ps-1" aria-label="맞춤법 검사"><svg class="ic" viewBox="0 0 16 16"><path d="M7 13.500V4L5.500 2.500H1.500v10h4zM7 4l1.500-1.500h4M7 13.500l2-1h4V10M8.500 7l2 2.500L15 4"/></svg></button>
    <button class="btn tb">한국어</button>
    <button class="btn tb ms-auto gap-1 notes-btn"><svg width="12" height="12"><path d="M0 5.500h12M0 8.500h9M0 11.500h12"/><path class="solid" d="M3 3l3-3 3 3z"/></svg>슬라이드 노트</button>
    <button class="btn tb gap-1 memo-btn"><svg width="12" height="12"><path class="solid" d="M0 0h12v9H8l-3 3V9H0z"/></svg>메모</button>
    <button class="btn tb view on" aria-label="기본 보기"><svg width="14" height="13"><path class="solid" fill-rule="evenodd" d="M0 0h14v13H0zM4 1h1v11H4zM6 3h6v4H6zM5 8h8v1H5z"/><path class="solid" d="M8 4h3v2H8z"/></svg></button>
    <button class="btn tb view" aria-label="여러 슬라이드"><svg width="14" height="13"><path class="solid" d="M0 0h6v5H0zM8 0h6v5H8zM0 8h6v5H0zM8 8h6v5H8z"/></svg></button>
    <button class="btn tb view" aria-label="읽기용 보기"><svg width="13" height="13"><path d="M6.500 13V2L5 .5H.5v10H5L6.500 12 8 10.500h4.500V.5H8L6.500 2M2 2.500h3M2 4.500h3M2 6.500h3M2 8.500h3M8 2.500h3M8 4.500h3M8 6.500h3M8 8.500h3"/></svg></button>
    <button class="btn tb view" aria-label="슬라이드 쇼"><svg width="13" height="13"><path stroke-width="2" d="M0 1h13"/><path d="M2.500 1v6.500h8V1M4 4.500h5M6.500 8v4M4 12.500h5"/></svg></button>
    <button class="btn tb zoom-out" aria-label="축소"><svg width="7" height="10"><path stroke-width="2" d="M0 5h6"/></svg></button>
    <input type="range" class="zoom" min="0" max="100" value="50" aria-label="확대/축소">
    <button class="btn tb" aria-label="확대"><svg width="9" height="10"><path stroke-width="2" d="M0 5h9M4.500 .5v9"/></svg></button>
    <button class="btn tb zoom-num">100 %</button>
    <button class="btn tb fit" aria-label="창에 맞춤"><svg width="13" height="13"><path d="M.5.500h12v12H.5zM6.500 2v3M6.500 8v3M2 6.500h3M8 6.500h3M5 3.500l1.500-1.500L8 3.500M5 9.500L6.500 11 8 9.500M3.500 5L2 6.500 3.500 8M9.500 5L11 6.500 9.500 8"/></svg></button>
  </footer>
</div>
<script src="https://cdn.jsdelivr.net/npm/bootstrap@5.3.0/dist/js/bootstrap.bundle.min.js"></script>
</body>
</html>
